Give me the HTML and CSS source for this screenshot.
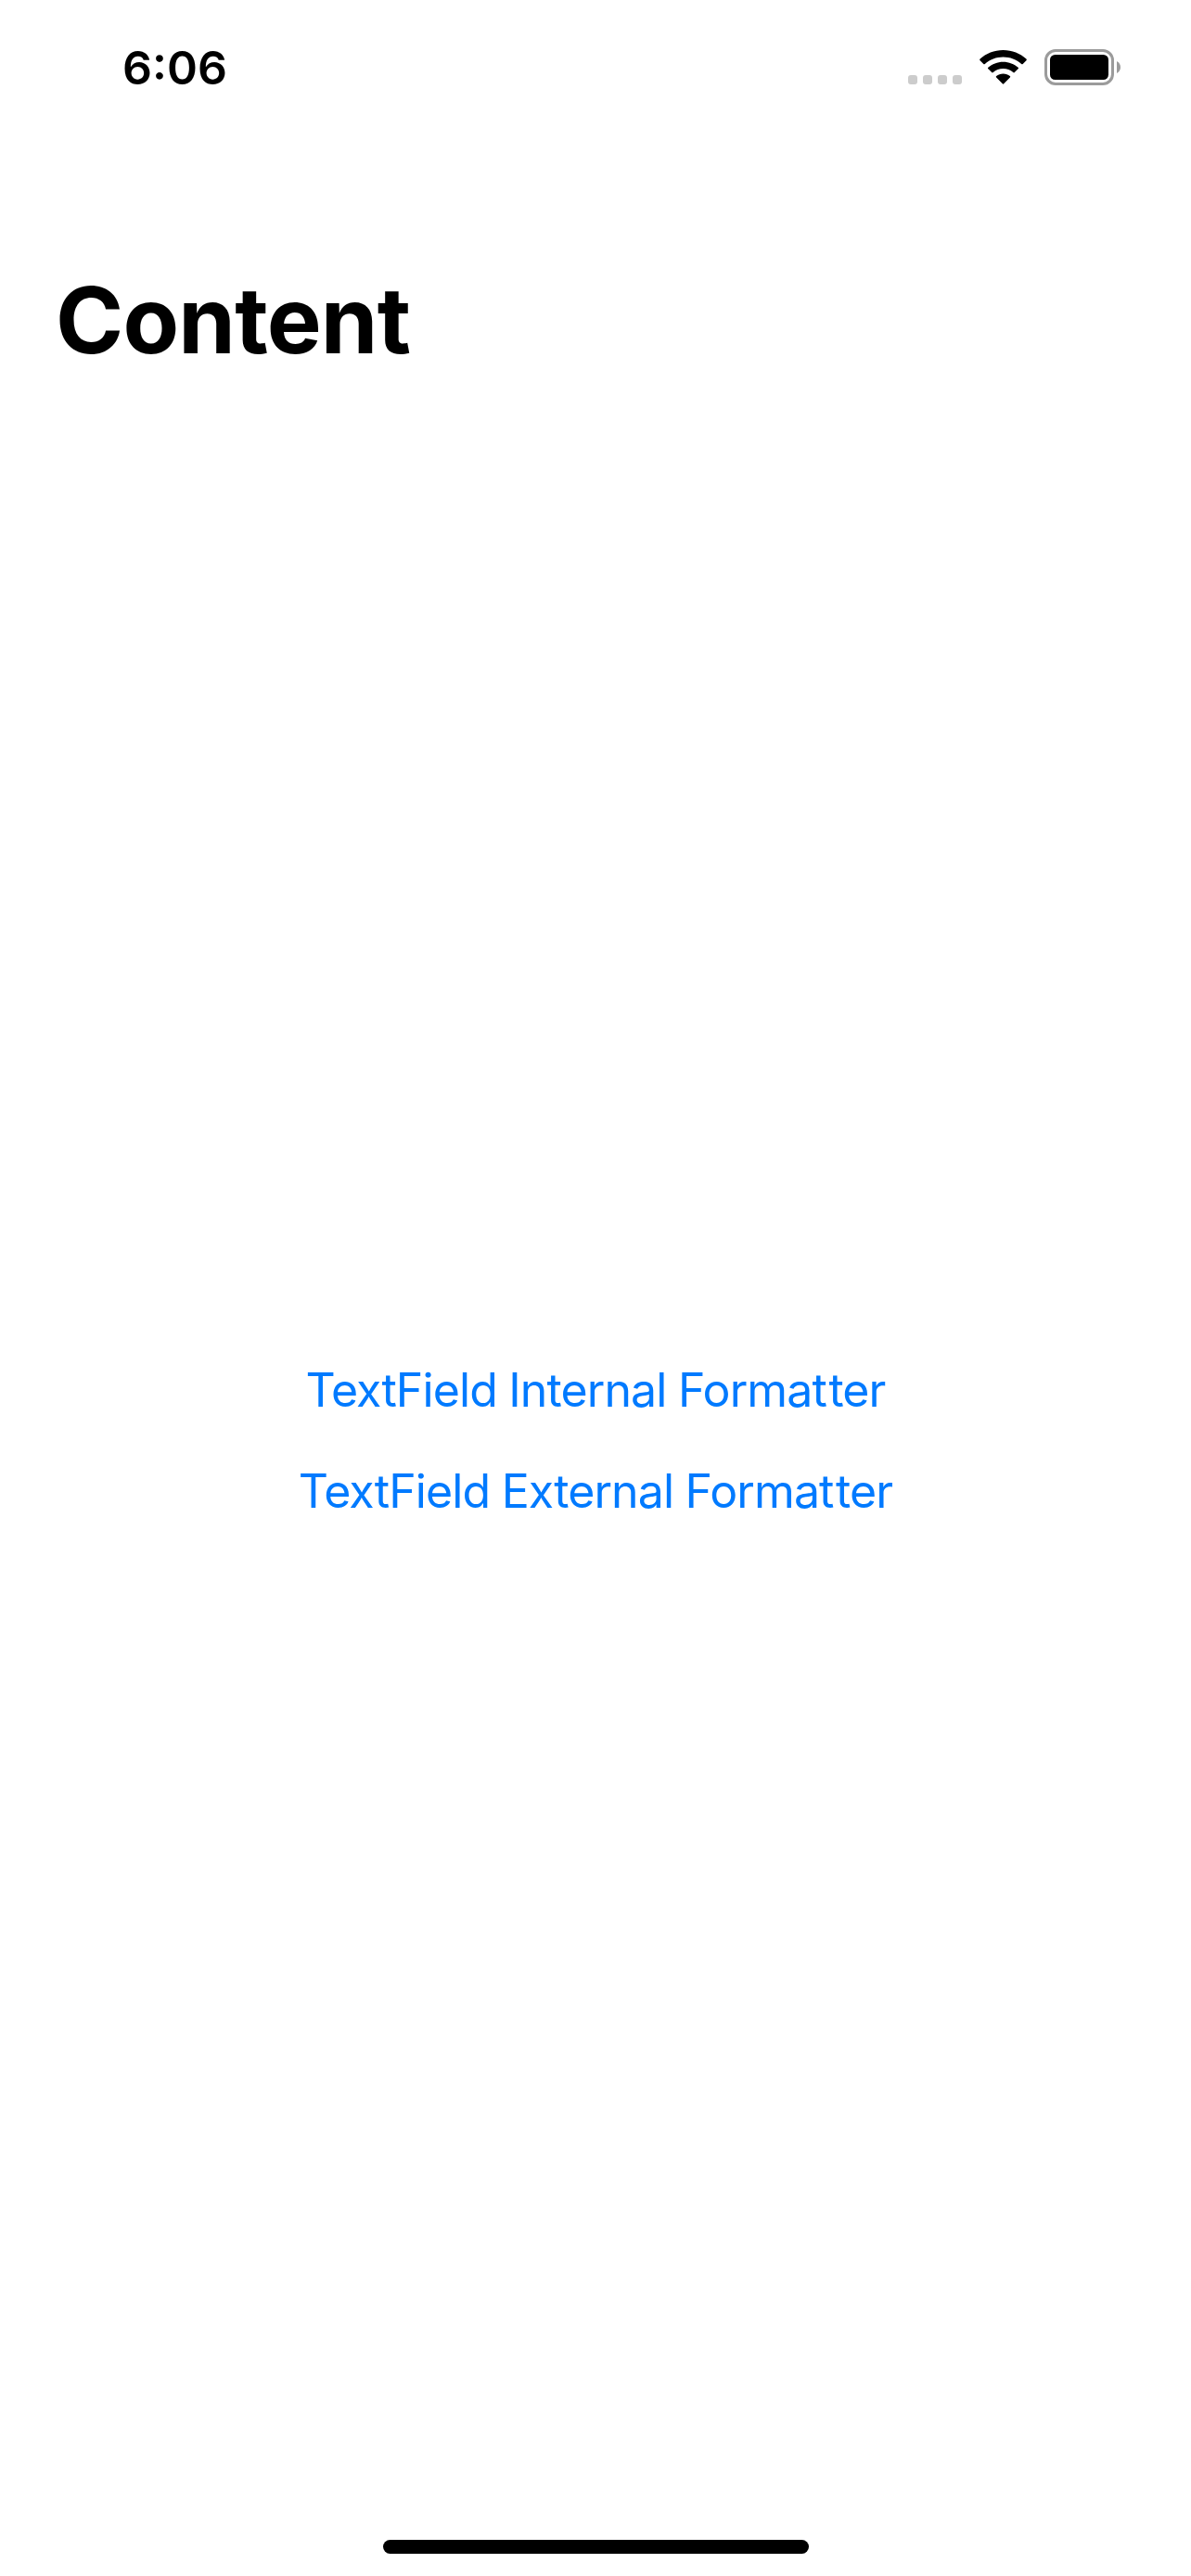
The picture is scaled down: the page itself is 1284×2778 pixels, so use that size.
FILE: index.html
```html
<!DOCTYPE html>
<html lang="en">
<head>
<meta charset="utf-8">
<title>Content</title>
<link rel="stylesheet" href="styles.css">
</head>
<body>
<div class="screen">
  <header class="status">
    <time class="clock">6:06</time>
    <div class="indicators">
      <svg class="signal" viewBox="0 0 59 10" width="59" height="10"><g fill="#ccc"><rect x="1" width="10" height="10" rx="3"/><rect x="17" width="10" height="10" rx="3"/><rect x="33" width="10" height="10" rx="3"/><rect x="49" width="10" height="10" rx="3"/></g></svg>
      <svg class="wifi" viewBox="0 0 51 37" width="51" height="37"><path d="M25.500 0C35 0 44 3.500 50.400 9.600Q51.200 10.400 50.400 11.200L46.700 15Q46 15.700 45.200 15C39.800 10.200 33 7.500 25.500 7.500S11.200 10.200 5.800 15Q5 15.700 4.300 15L.6 11.200Q-.2 10.400.6 9.600C7 3.500 16 0 25.500 0zM25.500 12.700C31.700 12.700 37.400 15 41.600 18.800Q42.400 19.500 41.600 20.300L37.800 24.100Q37.100 24.800 36.300 24.100C33.400 21.600 29.600 20.100 25.500 20.100S17.600 21.600 14.700 24.100Q13.900 24.800 13.200 24.100L9.400 20.300Q8.600 19.500 9.400 18.800C13.600 15 19.300 12.700 25.500 12.700zM25.500 25.500C28.300 25.500 30.800 26.400 32.800 27.900Q33.700 28.600 32.900 29.400L26.200 36.300Q25.500 37 24.800 36.300L18.100 29.400Q17.300 28.600 18.200 27.900C20.200 26.400 22.700 25.500 25.500 25.500z"/></svg>
      <svg class="battery" viewBox="0 0 82 39" width="82" height="39"><rect x="1.500" y="1.500" width="72" height="36" rx="10.500" fill="none" stroke="#9b9b9b" stroke-width="3"/><rect x="6" y="6" width="63" height="27" rx="5.500"/><path d="M78 13v13c5.300-2.400 5.300-10.600 0-13z" fill="#9b9b9b"/></svg>
    </div>
  </header>
  <h1 class="title">Content</h1>
  <main class="links">
    <a class="link">TextField Internal Forma<span class="pair">t</span>ter</a>
    <a class="link">TextField External Forma<span class="pair">t</span>ter</a>
  </main>
  <div class="home"></div>
</div>
</body>
</html>
```
FILE: styles.css
```css
body { margin: 0; background: #fff; color: #000; font-family: Inter, "Liberation Sans", sans-serif; }
.screen { display: flex; flex-direction: column; align-items: center; width: 1284px; height: 2778px; box-sizing: border-box; padding-bottom: 24px; }
.status { display: flex; justify-content: space-between; align-items: center; width: 100%; height: 145px; box-sizing: border-box; padding: 0 76px 0 132px; }
.clock { font-size: 50px; font-weight: 600; line-height: 61px; padding-top: 2px; }
.indicators { display: flex; align-items: center; gap: 19px; }
.signal { align-self: flex-end; margin-bottom: 1px; }
.title { align-self: flex-start; margin: 140px 0 0 60px; font-size: 99px; line-height: 120px; font-weight: 700; letter-spacing: -0.8px; }
.links { display: flex; flex-direction: column; align-items: center; gap: 48px; margin-top: 1064px; }
.link { color: #007aff; font-size: 50px; line-height: 61px; letter-spacing: -0.9px; word-spacing: -0.7px; font-variant-ligatures: none; white-space: nowrap; }
.pair { letter-spacing: 1.6px; }
.home { width: 459px; height: 15px; border-radius: 8px; background: #000; margin-top: auto; }
```
